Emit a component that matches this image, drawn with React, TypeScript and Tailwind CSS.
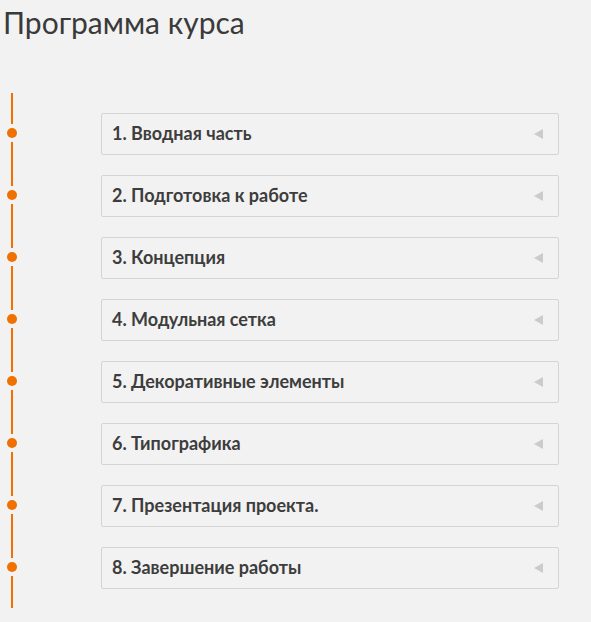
import React from "react";

const items = [
  "1. Вводная часть",
  "2. Подготовка к работе",
  "3. Концепция",
  "4. Модульная сетка",
  "5. Декоративные элементы",
  "6. Типографика",
  "7. Презентация проекта.",
  "8. Завершение работы",
];

export default function App() {
  return (
    <div
      className="min-h-[622px] w-full bg-[#f2f2f2] text-[#333]"
      style={{ fontFamily: "Lato, 'Noto Sans', sans-serif" }}
    >
      <h1 className="pl-[3px] pt-[3px] text-[30px] leading-[38px] font-normal text-[#3a3a3a]">
        Программа курса
      </h1>
      <div className="mt-[52px] flex">
        <div className="flex w-[24px] flex-col items-center">
          <div className="h-[31px] w-[2px] bg-[#f07000]" />
          {items.map((_, i) => (
            <React.Fragment key={i}>
              <div className="my-[4px] h-[10px] w-[10px] rounded-full bg-[#f07000]" />
              {i < items.length - 1 && <div className="h-[44px] w-[2px] bg-[#f07000]" />}
            </React.Fragment>
          ))}
          <div className="h-[32px] w-[2px] bg-[#f07000]" />
        </div>
        <div className="ml-[77px] flex w-[458px] flex-col gap-[20px] pt-[20px]">
          {items.map((t) => (
            <div
              key={t}
              className="flex h-[42px] items-center justify-between rounded-[2px] border border-[#d4d4d4] pl-[10px] pr-[15px]"
            >
              <span className="-mt-[2px] text-[18px] leading-[22px] font-bold text-[#3d3d3d]">{t}</span>
              <svg width="9" height="10" viewBox="0 0 9 10">
                <polygon points="9,0 9,10 0,5" fill="#cbcbcb" />
              </svg>
            </div>
          ))}
        </div>
      </div>
    </div>
  );
}
